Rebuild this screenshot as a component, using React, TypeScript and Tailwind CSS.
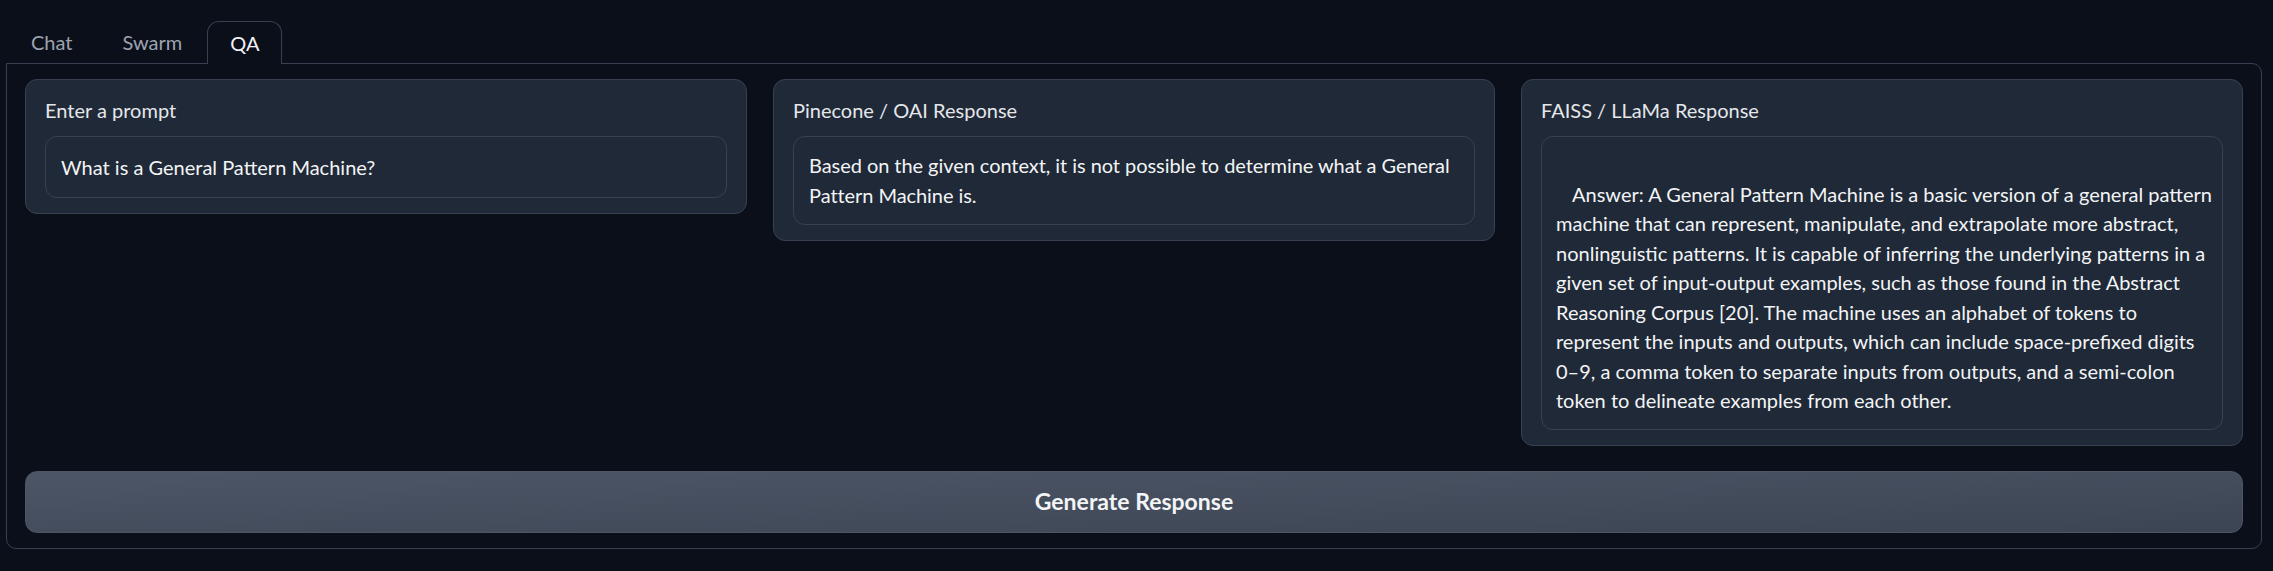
import React from 'react';

const font = { fontFamily: 'Lato, "Noto Sans", sans-serif' };

const tabs = ['Chat', 'Swarm', 'QA'];

const oaiLines = [
    'Based on the given context, it is not possible to determine what a General',
    'Pattern Machine is.',
];

const llamaLines = [
    'machine that can represent, manipulate, and extrapolate more abstract,',
    'nonlinguistic patterns. It is capable of inferring the underlying patterns in a',
    'given set of input-output examples, such as those found in the Abstract',
    'Reasoning Corpus [20]. The machine uses an alphabet of tokens to',
    'represent the inputs and outputs, which can include space-prefixed digits',
    '0–9, a comma token to separate inputs from outputs, and a semi-colon',
    'token to delineate examples from each other.',
];

const Card: React.FC<{ label: string; children: React.ReactNode }> = ({ label, children }) => (
    <div className="flex-1 min-w-0 bg-[#1f2937] border border-[#374151] rounded-[12px] px-[19px] pt-[16px] pb-[15px]">
        <div className="text-[20px] leading-[29px] text-[#e5e7eb] mb-[11px]">{label}</div>
        {children}
    </div>
);

const App: React.FC = () => {
    return (
        <div className="bg-[#0b0f19] min-h-screen w-full pt-[21px] pl-[6px] pr-[11px]" style={font}>
            <div className="flex h-[42px]">
                {tabs.map((t) =>
                    t === 'QA' ? (
                        <div key={t} className="relative z-10 -mb-px h-[43px] px-[22px] flex items-center text-[20px] text-[#f3f4f6] bg-[#0b0f19] border border-b-0 border-[#374151] rounded-t-[12px]">
                            {t}
                        </div>
                    ) : (
                        <div key={t} className="px-[25px] flex items-center text-[20px] text-[#9ca3af]">
                            {t}
                        </div>
                    )
                )}
            </div>

            <div className="border border-[#374151] rounded-b-[10px] rounded-tr-[10px] px-[18px] pt-[15px] pb-[15px] flex flex-col gap-[25px]">
                <div className="flex items-start gap-[26px]">
                    <Card label="Enter a prompt">
                        <div className="h-[62px] flex items-center border border-[#374151] rounded-[12px] px-[15px] text-[20px] text-[#f3f4f6]">
                            What is a General Pattern Machine?
                        </div>
                    </Card>

                    <Card label="Pinecone / OAI Response">
                        <div className="border border-[#374151] rounded-[12px] px-[15px] py-[14px] text-[20px] leading-[29.5px] tracking-[-0.06px] text-[#f3f4f6]">
                            {oaiLines.map((l, i) => <div key={i} className="whitespace-nowrap">{l}</div>)}
                        </div>
                    </Card>

                    <Card label="FAISS / LLaMa Response">
                        <div className="border border-[#374151] rounded-[12px] px-[14px] py-[13px] text-[20px] leading-[29.5px] text-[#f3f4f6]">
                            <div className="h-[29.5px]" />
                            <div className="whitespace-nowrap pl-[16px]">Answer: A General Pattern Machine is a basic version of a general pattern</div>
                            {llamaLines.map((l, i) => <div key={i} className="whitespace-nowrap">{l}</div>)}
                        </div>
                    </Card>
                </div>

                <button className="h-[62px] w-full rounded-[12px] border border-[#4b5563] bg-gradient-to-br from-[#4d5666] to-[#3d4555] text-[23px] font-bold text-[#f3f4f6]">
                    Generate Response
                </button>
            </div>
        </div>
    );
};

export default App;
